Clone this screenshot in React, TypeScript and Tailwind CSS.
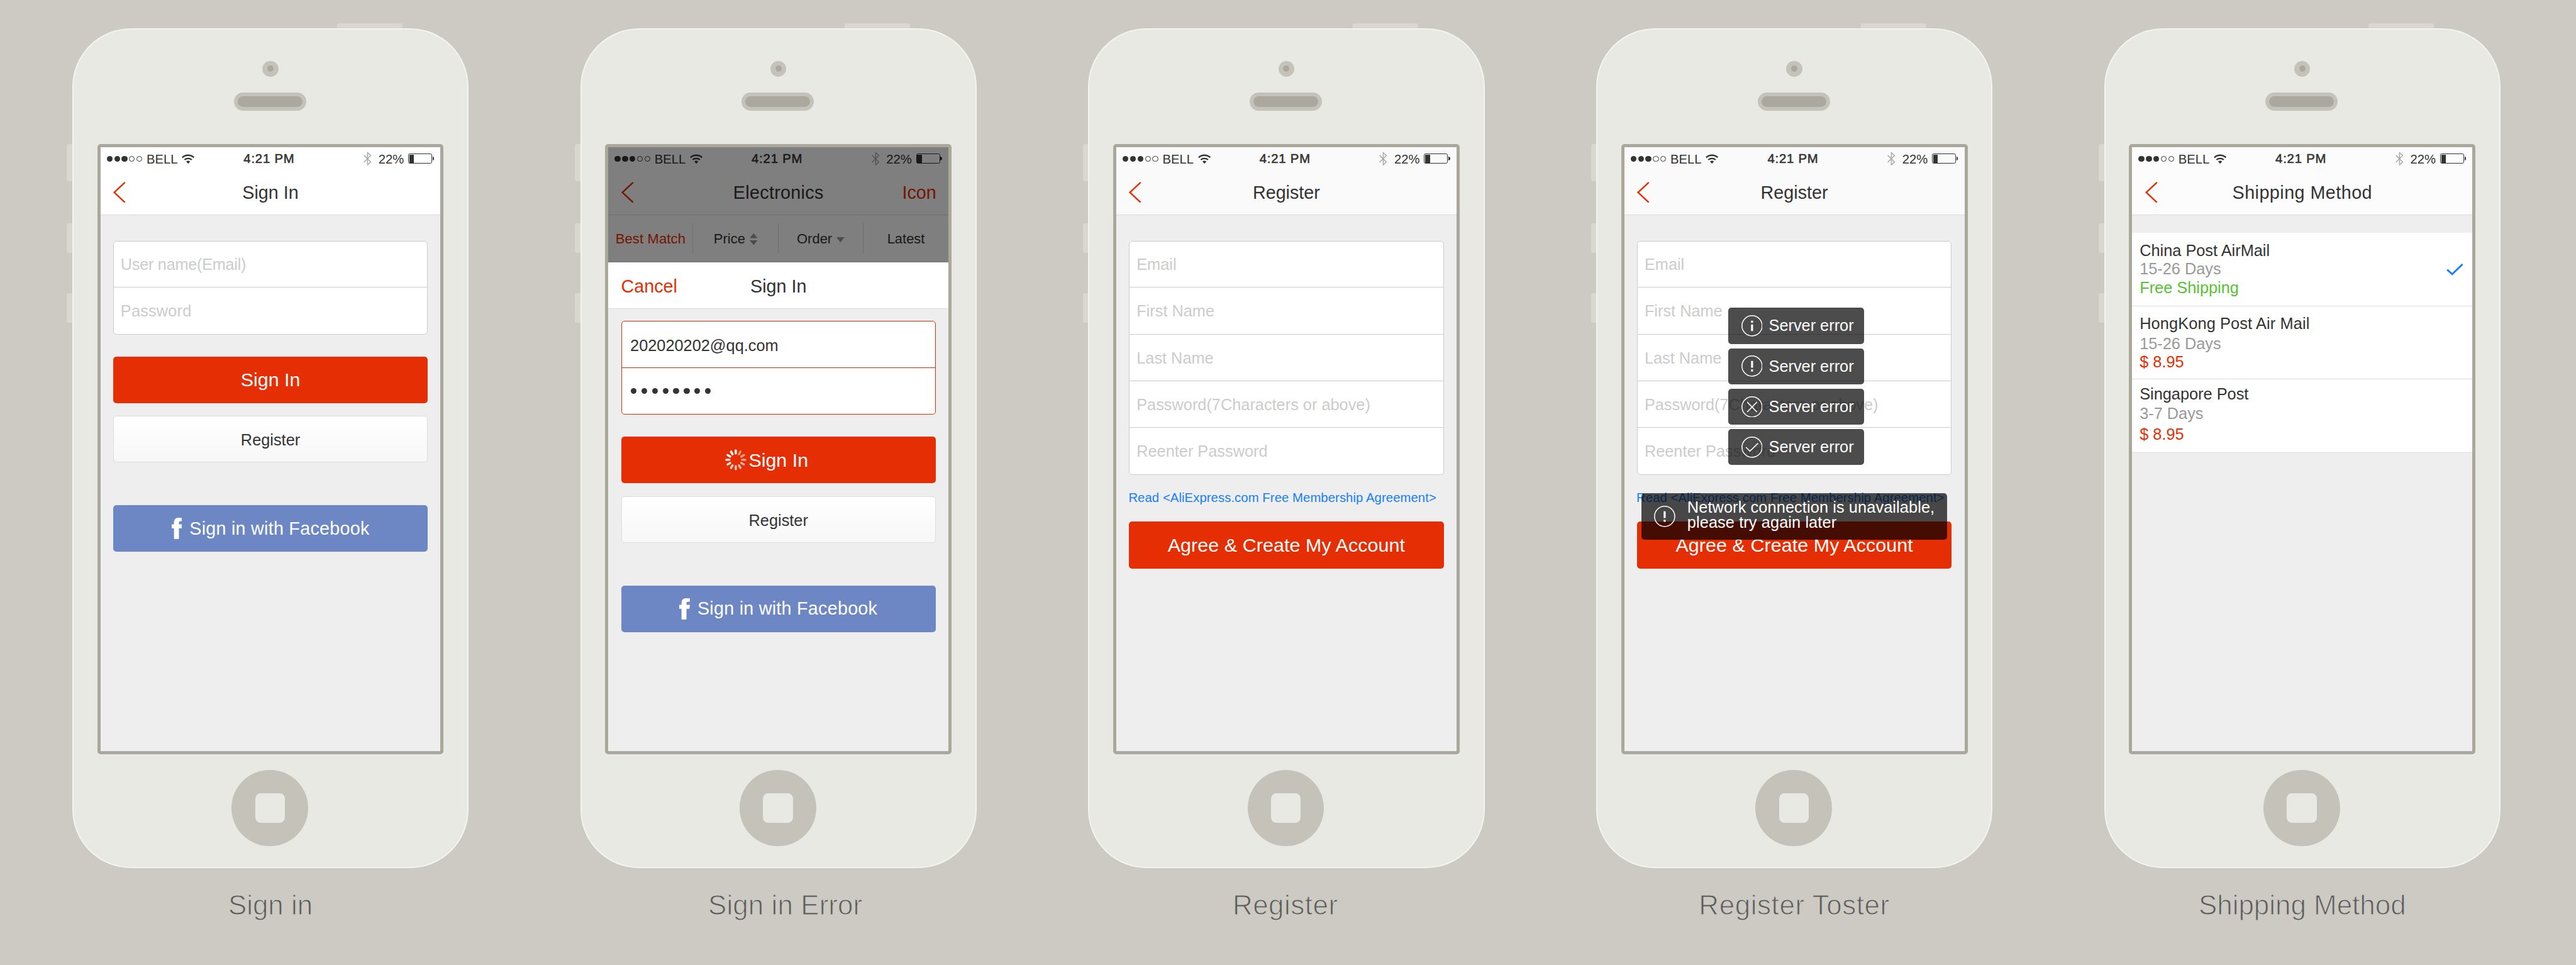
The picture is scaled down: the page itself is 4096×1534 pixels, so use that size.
import React from "react";

type Tone = "white" | "soft" | "softer";

const navTone: Record<Tone, string> = {
  white: "bg-white",
  soft: "bg-[#fafafa]",
  softer: "bg-[#fcfcfc]",
};

/* ---------- icons ---------- */

function Wifi() {
  return (
    <svg width="24" height="18" viewBox="0 0 24 18" fill="none" className="ml-2 mt-px">
      <path d="M1.1 6.3A16 16 0 0 1 22.9 6.3" stroke="#333" strokeWidth="2.8" />
      <path d="M5.1 10.7A10.4 10.4 0 0 1 18.9 10.7" stroke="#333" strokeWidth="2.6" />
      <path d="M8.3 14A5.6 5.6 0 0 1 15.7 14L12 18Z" fill="#333" />
    </svg>
  );
}

function Bluetooth() {
  return (
    <svg width="15" height="27" viewBox="0 0 15 27" fill="none" stroke="#aaa" strokeWidth="1.8">
      <path d="M.8 7L13.6 19.6L7.6 25V2L13.6 7.4L.8 20" />
    </svg>
  );
}

function Battery() {
  return (
    <div className="ml-2 mt-px flex items-center">
      <div className="h-[19px] w-[45px] rounded-[3px] border border-[#333] p-px">
        <div className="h-full w-[9px] bg-[#333]" />
      </div>
      <div className="ml-px h-[7px] w-[3px] rounded-r-full bg-[#333]" />
    </div>
  );
}

function BackArrow() {
  return (
    <svg width="24" height="40" viewBox="0 0 24 40" fill="none" stroke="#e62e04" strokeWidth="2.8" className="mt-0.5">
      <path d="M22.2 1L2 20L22.2 39" />
    </svg>
  );
}

function FacebookMark() {
  return (
    <svg width="20" height="40" viewBox="0 0 20 40" fill="#fff">
      <path d="M20 .3V6.6H16.6C14.2 6.6 13.6 7.8 13.6 9.6V12.3H20L19.2 19.8H13.6V40H4.3V19.8H0V12.3H4.3V9C4.3 3 7.5 0 13.5 0Z" />
    </svg>
  );
}

const spokes = [1, 0.5, 0.55, 0.6, 0.65, 0.7, 0.75, 0.8, 0.87, 0.92, 0.96, 1];

function Spinner() {
  return (
    <svg width="40" height="40" viewBox="0 0 40 40" stroke="#fff" strokeWidth="4" strokeLinecap="round">
      {spokes.map((opacity, i) => (
        <line key={i} x1="20" y1="2.2" x2="20" y2="8" opacity={opacity} transform={`rotate(${i * 30} 20 20)`} />
      ))}
    </svg>
  );
}

type ToastKind = "info" | "alert" | "cross" | "tick";

function ToastIcon({ kind }: { kind: ToastKind }) {
  return (
    <svg width="40" height="40" viewBox="0 0 40 40" fill="none" stroke="#fff" strokeWidth="1.8" className="shrink-0">
      <circle cx="20" cy="20" r="19" />
      {kind === "info" && <path d="M20 10.3V14.1M20 17.5V30" strokeWidth="3.8" />}
      {kind === "alert" && <path d="M20 10.3V23M20 26.4V30.2" strokeWidth="3.8" />}
      {kind === "cross" && <path d="M10.8 10.8L29.2 29.6M29.2 10.8L10.8 29.6" />}
      {kind === "tick" && <path d="M8.4 20.2L16 27.4L31.4 12.6" />}
    </svg>
  );
}

/* ---------- shared pieces ---------- */

function StatusBar() {
  return (
    <div className="grid h-10 grid-cols-[1fr_auto_1fr] items-center px-3 pt-0.5 text-2xl leading-none">
      <div className="flex items-center pt-px">
        <div className="flex gap-[3px]">
          <i className="size-[11px] rounded-full bg-[#333]" />
          <i className="size-[11px] rounded-full bg-[#333]" />
          <i className="size-[11px] rounded-full bg-[#333]" />
          <i className="size-[11px] rounded-full border border-[#333]" />
          <i className="size-[11px] rounded-full border border-[#333]" />
        </div>
        <span className="ml-2 pt-px">BELL</span>
        <Wifi />
      </div>
      <span className="mr-[5px] pt-px tracking-[0.95px] [-webkit-text-stroke:0.7px_#333]">4:21 PM</span>
      <div className="flex items-center justify-end">
        <Bluetooth />
        <span className="ml-[13px] pt-0.5">22%</span>
        <Battery />
      </div>
    </div>
  );
}

function NavBar({ title, left, right }: { title: React.ReactNode; left?: React.ReactNode; right?: React.ReactNode }) {
  return (
    <div className="grid h-[88px] grid-cols-[1fr_auto_1fr] items-center border-b border-[#dcdcdc] px-6 text-[34px] leading-none">
      <div className="flex text-[#e62e04]">{left}</div>
      <div className="pt-1">{title}</div>
      <div className="flex justify-end pt-1 text-[#e62e04]">{right}</div>
    </div>
  );
}

function Header({ title, tone = "white", right }: { title: React.ReactNode; tone?: Tone; right?: React.ReactNode }) {
  return (
    <header className={navTone[tone]}>
      <StatusBar />
      <NavBar title={title} left={<BackArrow />} right={right} />
    </header>
  );
}

function Fields({ rows }: { rows: { label: string; className?: string }[] }) {
  return (
    <div className="divide-y divide-[#ccc] rounded-md border border-[#ccc] bg-white">
      {rows.map((row) => (
        <div
          key={row.label}
          className="flex h-[88px] items-center pl-[13px] pt-0.5 text-3xl leading-none text-[#ccc] first:h-[87px] last:h-[87px]"
        >
          <span className={row.className}>{row.label}</span>
        </div>
      ))}
    </div>
  );
}

function PrimaryButton({ children }: { children: React.ReactNode }) {
  return (
    <button className="relative flex h-[88px] w-full items-center justify-center rounded-md bg-[#e62e04] text-4xl leading-none text-white">
      {children}
    </button>
  );
}

function SignInActions({ busy = false }: { busy?: boolean }) {
  return (
    <>
      <div className="mt-[41px]">
        <PrimaryButton>
          <span className="relative">
            {busy && (
              <span className="absolute -left-[44px] -top-0.5">
                <Spinner />
              </span>
            )}
            Sign In
          </span>
        </PrimaryButton>
      </div>
      <button className="mt-6 flex h-[88px] w-full items-center justify-center rounded-md border border-[#ddd] bg-linear-to-b from-white to-[#f7f7f7] pt-1 text-3xl leading-none">
        Register
      </button>
      <button className="mt-20 flex h-[88px] w-full items-center justify-center gap-[14px] rounded-md bg-[#6d87c4] text-[34px] leading-none tracking-[0.3px] text-white">
        <FacebookMark />
        Sign in with Facebook
      </button>
    </>
  );
}

/* ---------- screens ---------- */

function SignIn() {
  return (
    <>
      <Header title="Sign In" />
      <div className="px-6 pt-12">
        <Fields rows={[{ label: "User name(Email)", className: "tracking-[-0.35px]" }, { label: "Password", className: "tracking-[0.2px]" }]} />
        <SignInActions />
      </div>
    </>
  );
}

function SortArrows() {
  return (
    <svg width="15" height="22" viewBox="0 0 15 22" fill="#999" className="ml-2">
      <path d="M7.5 0L15 9H0ZM7.5 22L15 13H0Z" />
    </svg>
  );
}

function DownArrow() {
  return (
    <svg width="15" height="10" viewBox="0 0 15 10" fill="#999" className="ml-2 mt-1">
      <path d="M7.5 10L15 0H0Z" />
    </svg>
  );
}

function SignInError() {
  return (
    <>
      <div className="relative">
        <Header title={<span className="tracking-[0.35px]">Electronics</span>} right={<span className="-mr-px">Icon</span>} />
        <div className="grid h-[88px] grid-cols-4 items-center border-b border-[#dcdcdc] bg-white text-[26px] leading-none">
          <div className="flex h-14 items-center justify-center border-r border-[#dcdcdc] pt-0.5 tracking-[0.2px] text-[#e62e04]">Best Match</div>
          <div className="flex h-14 items-center justify-center border-r border-[#dcdcdc] pt-0.5">
            Price
            <SortArrows />
          </div>
          <div className="flex h-14 items-center justify-center border-r border-[#dcdcdc] pt-0.5">
            Order
            <DownArrow />
          </div>
          <div className="flex h-14 items-center justify-center pt-0.5">Latest</div>
        </div>
        <div className="absolute inset-0 bg-black/50" />
      </div>
      <div className="bg-white">
        <NavBar title="Sign In" left={<span className="pt-1">Cancel</span>} />
      </div>
      <div className="px-6 pt-[23px]">
        <div className="divide-y divide-[#e62e04] rounded-md border border-[#e62e04] bg-white">
          <div className="flex h-[87px] items-center pl-4 pt-1 text-3xl leading-none">202020202@qq.com</div>
          <div className="flex h-[87px] items-center gap-[9px] pl-[17px]">
            {Array.from({ length: 8 }, (_, i) => (
              <i key={i} className="size-[11px] rounded-full bg-[#333]" />
            ))}
          </div>
        </div>
        <SignInActions busy />
      </div>
    </>
  );
}

function Register() {
  return (
    <>
      <Header title="Register" tone="soft" />
      <div className="px-6 pt-12">
        <Fields
          rows={[
            { label: "Email" },
            { label: "First Name" },
            { label: "Last Name" },
            { label: "Password(7Characters or above)" },
            { label: "Reenter Password" },
          ]}
        />
        <div className="-ml-px mt-[29px] flex h-7 items-center whitespace-nowrap text-2xl leading-none tracking-[0.1px] text-[#157efb]">
          {"Read <AliExpress.com Free Membership Agreement>"}
        </div>
        <div className="mt-[31px]">
          <PrimaryButton>
            <span className="tracking-[0.1px]">{"Agree & Create My Account"}</span>
          </PrimaryButton>
        </div>
      </div>
    </>
  );
}

const toasts: ToastKind[] = ["info", "alert", "cross", "tick"];

function RegisterToaster() {
  return (
    <div className="relative">
      <Register />
      <div className="absolute inset-x-0 top-[302px] flex flex-col items-center gap-2 text-3xl leading-none text-white">
        {toasts.map((kind) => (
          <div key={kind} className="ml-[7px] flex h-[68px] w-[255px] items-center rounded-md bg-black/70 pl-6">
            <ToastIcon kind={kind} />
            <span className="ml-3">Server error</span>
          </div>
        ))}
        <div className="mt-[45px] flex h-[88px] w-[575px] items-center rounded-md bg-black/70 pl-6">
          <ToastIcon kind="alert" />
          <div className="ml-[22px] whitespace-nowrap pb-[6px] leading-7 tracking-[0.12px]">
            Network connection is unavailable,
            <br />
            please try again later
          </div>
        </div>
      </div>
    </div>
  );
}

function ShippingMethod() {
  return (
    <>
      <Header title={<span className="tracking-[0.55px]">Shipping Method</span>} tone="softer" />
      <ul className="mt-[33px] text-3xl">
        <li className="flex h-[138px] items-center justify-between border-b border-[#dcdcdc] bg-white px-[14px] pr-4">
          <div className="leading-[35px]">
            <p>China Post AirMail</p>
            <p className="text-[#999]">15-26 Days</p>
            <p className="text-[#58c234]">Free Shipping</p>
          </div>
          <svg width="34" height="24" viewBox="0 0 34 24" fill="none" stroke="#157efb" strokeWidth="3.4">
            <path d="M2.5 12.6L12 21L31.5 2.4" />
          </svg>
        </li>
        <li className="h-[138px] border-b border-[#dcdcdc] bg-white px-[14px] pt-[14px]">
          <p className="leading-9 tracking-[0.15px]">HongKong Post Air Mail</p>
          <p className="mt-0.5 leading-9 text-[#999]">15-26 Days</p>
          <p className="leading-[34px] text-[#e62e04]">$ 8.95</p>
        </li>
        <li className="h-[138px] border-b border-[#dcdcdc] bg-white px-[14px] pt-[9px]">
          <p className="leading-9">Singapore Post</p>
          <p className="leading-10 text-[#999]">3-7 Days</p>
          <p className="leading-9 text-[#e62e04]">$ 8.95</p>
        </li>
      </ul>
    </>
  );
}

/* ---------- device ---------- */

function Phone({ caption, captionClass = "", children }: { caption: string; captionClass?: string; children: React.ReactNode }) {
  return (
    <figure className="relative flex w-[746px] shrink-0 flex-col items-center">
      <div className="absolute -top-[9px] right-[125px] h-5 w-[123px] rounded-t-[4px] bg-[#d9d7cf]" />
      <div className="absolute -left-[10px] top-[218px] h-[70px] w-5 rounded-l-[4px] bg-[#d9d7cf]" />
      <div className="absolute -left-[10px] top-[367px] h-14 w-5 rounded-l-[4px] bg-[#d9d7cf]" />
      <div className="absolute -left-[10px] top-[498px] h-14 w-5 rounded-l-[4px] bg-[#d9d7cf]" />
      <div className="relative flex h-[1580px] w-full flex-col items-center rounded-[110px] border-[3px] border-[#f3f4ef] bg-[#e8e9e3] pt-[59px]">
        <div className="flex size-[30px] items-center justify-center rounded-full bg-[#c5c2b9]">
          <div className="size-3 rounded-full bg-[#aaa89f]" />
        </div>
        <div className="mr-0.5 mt-[30px] flex h-[34px] w-[136px] items-center justify-center rounded-full bg-[#c5c2b9]">
          <div className="h-5 w-[122px] rounded-full bg-[#aaa89f]" />
        </div>
        <div className="mt-[63px] h-[1148px] w-[652px] rounded-[6px] border-[6px] border-[#aaa89d] bg-[#eee] text-[#333]">
          {children}
        </div>
        <div className="mr-0.5 mt-[29px] flex size-[144px] items-center justify-center rounded-full bg-[#c5c2b9]">
          <div className="size-14 rounded-[10px] bg-[#e8e9e3]" />
        </div>
      </div>
      <figcaption className="mt-[38px] whitespace-nowrap text-[52px] leading-[64px] text-[#5c5c5c] [-webkit-text-stroke:1.3px_#cdcac3]">
        <span className={captionClass}>{caption}</span>
      </figcaption>
    </figure>
  );
}

export default function App() {
  return (
    <main className="h-screen w-screen overflow-hidden bg-[#cdcac3] font-['Liberation_Sans',Arial,sans-serif]">
      <div className="flex h-[1816px] w-[4848px] gap-[210px] pl-[136px] pt-[53px] [zoom:0.84488]">
        <Phone caption="Sign in">
          <SignIn />
        </Phone>
        <Phone caption="Sign in Error" captionClass="ml-[26px] tracking-[0.1px]">
          <SignInError />
        </Phone>
        <Phone caption="Register" captionClass="mr-1 tracking-[0.6px]">
          <Register />
        </Phone>
        <Phone caption="Register Toster" captionClass="tracking-[0.7px]">
          <RegisterToaster />
        </Phone>
        <Phone caption="Shipping Method">
          <ShippingMethod />
        </Phone>
      </div>
    </main>
  );
}
